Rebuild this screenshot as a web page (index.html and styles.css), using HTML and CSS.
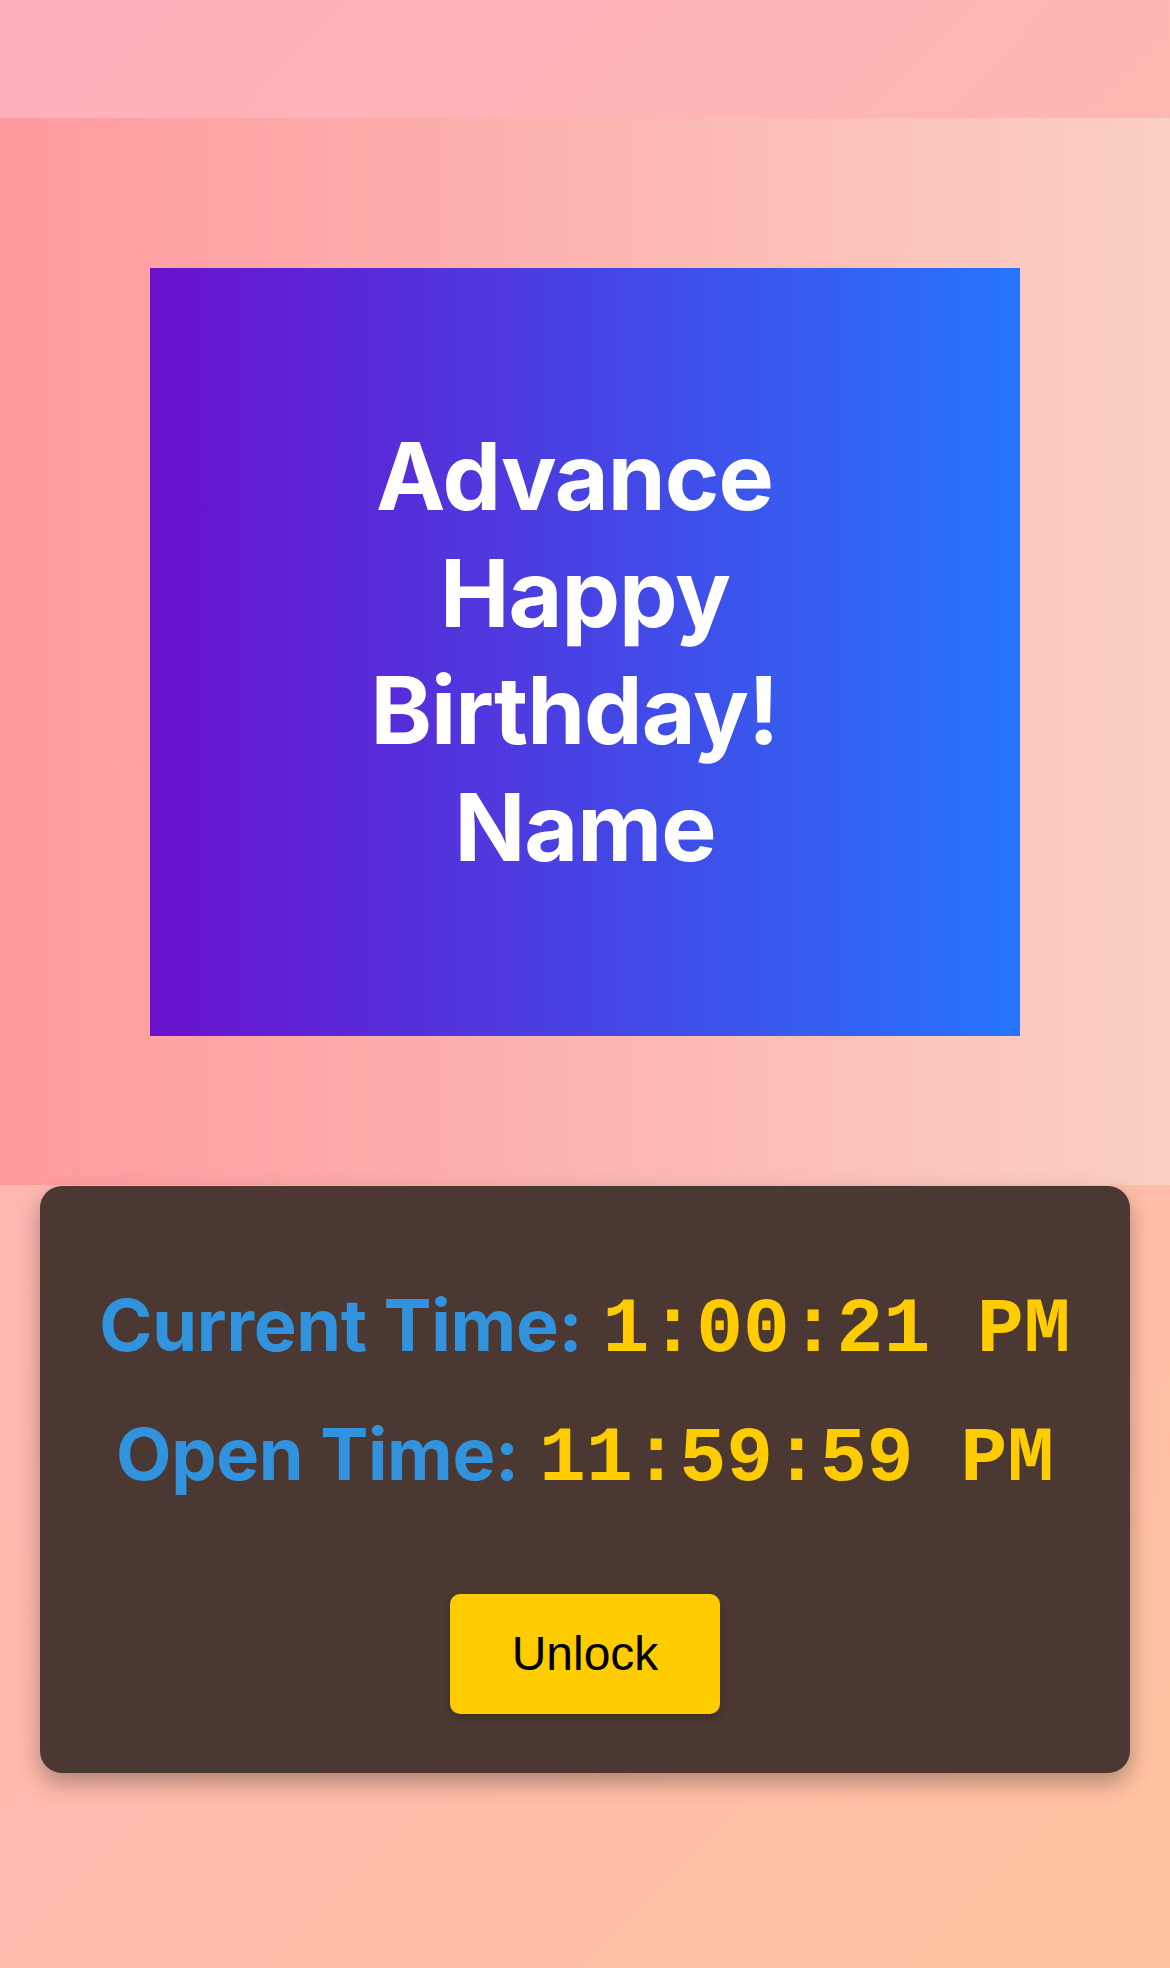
FILE: index.html
```html
<!DOCTYPE html>
<html lang="en">
<head>
<meta charset="utf-8">
<title>Advance Happy Birthday</title>
<link rel="stylesheet" href="styles.css">
</head>
<body>
<div class="page">
  <div class="top-space"></div>
  <section class="hero">
    <div class="card">
      <h1 class="title">
        <span class="line line--trail">Advance</span>
        <span class="line">Happy</span>
        <span class="line line--trail">Birthday!</span>
        <span class="line">Name</span>
      </h1>
    </div>
  </section>
  <section class="panel">
    <p class="row"><span class="label">Current Time:</span> <span class="clock">1:00:21 PM</span></p>
    <p class="row row--second"><span class="label">Open Time:</span> <span class="clock">11:59:59 PM</span></p>
    <button class="unlock" type="button">Unlock</button>
  </section>
</div>
</body>
</html>
```

FILE: styles.css
```css
* { box-sizing: border-box; }

html, body {
  margin: 0;
  padding: 0;
}

body {
  width: 1170px;
  min-height: 1968px;
  background: linear-gradient(135deg, #ffafbd 0%, #ffc3a0 100%);
  font-family: "Inter", "Liberation Sans", sans-serif;
}

.page {
  display: flex;
  flex-direction: column;
  min-height: 1968px;
}

.top-space {
  height: 118px;
}

.hero {
  padding: 150px 150px 149px;
  background: linear-gradient(to right, #ff9a9e 0%, #fad0c4 100%);
}

.card {
  height: 768px;
  display: flex;
  align-items: center;
  justify-content: center;
  background: linear-gradient(to right, #6a11cb 0%, #2575fc 100%);
}

.title {
  margin: 0;
  color: #ffffff;
  font-family: "Inter", "Liberation Sans", sans-serif;
  font-weight: 700;
  font-size: 93px;
  line-height: 117px;
  text-align: center;
  letter-spacing: -1px;
}

.line {
  display: block;
}

.line--trail {
  padding-right: 21px;
}

.panel {
  margin: 1px 40px 0;
  padding: 94px 0 59px;
  background: #4b3832;
  border-radius: 22px;
  box-shadow: 0 10px 22px rgba(0, 0, 0, 0.3);
  display: flex;
  flex-direction: column;
  align-items: center;
}

.row {
  margin: 0;
  line-height: 90px;
  font-size: 72px;
  text-align: center;
  white-space: nowrap;
}

.row--second {
  margin-top: 34px;
}

.label {
  color: #3193de;
  font-family: "Inter", "Liberation Sans", sans-serif;
  font-weight: 700;
  letter-spacing: -0.3px;
}

.clock {
  color: #ffcc00;
  font-family: "Liberation Mono", "DejaVu Sans Mono", monospace;
  font-weight: 700;
  font-size: 78px;
}

.unlock {
  margin-top: 90px;
  height: 120px;
  padding: 0 62px;
  border: none;
  border-radius: 10px;
  background: #ffcc00;
  color: #000000;
  font-family: "Liberation Sans", "Arial", sans-serif;
  font-size: 48px;
  line-height: 120px;
  box-shadow: 0 4px 8px rgba(0, 0, 0, 0.2);
  cursor: pointer;
}
```
